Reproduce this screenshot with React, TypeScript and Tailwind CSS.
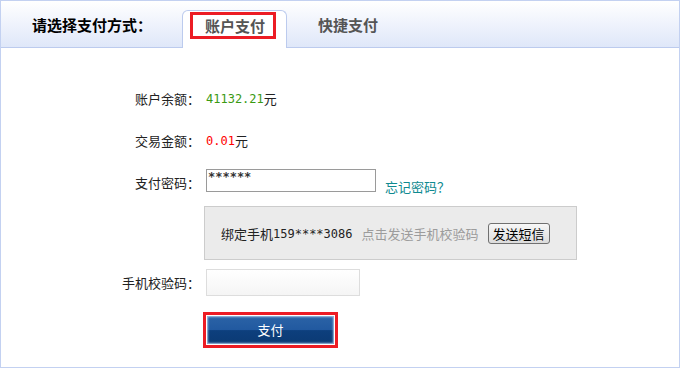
const mono = "font-['DejaVu_Sans_Mono','Noto_Sans_CJK_SC',monospace] text-[12px]";

export default function App() {
  return (
    <div className="w-[680px] h-[368px] border border-[#c3d1f1] bg-white flex flex-col font-['Noto_Sans_CJK_SC',sans-serif] text-[13px] text-[#222] leading-[20px]">
      <div className="h-[47px] shrink-0 flex items-stretch border-b border-[#bccbee] bg-gradient-to-b from-white to-[#dfe7f9]">
        <div className="w-[181px] pl-[31px] pt-[2px] flex items-center text-[15px] font-bold text-black">
          请选择支付方式：
        </div>
        <div className="mt-[9px] -mb-px w-[105px] bg-white border border-b-0 border-[#bccbee] rounded-t-[6px] pl-[7px] pt-[1px]">
          <span className="flex items-center h-[27px] w-[86px] border-[3px] border-[#ec1c24] pl-[12px] text-[15px] font-bold text-[#555] leading-none">
            账户支付
          </span>
        </div>
        <div className="ml-[31px] pt-[2px] flex items-center text-[15px] font-bold text-[#555]">快捷支付</div>
      </div>

      <div className="flex flex-col">
        <div className="mt-[41px] h-[20px] flex items-center">
          <div className="w-[199px] text-right">账户余额：</div>
          <div className="ml-[6px] flex items-center">
            <span className={`${mono} text-[#3a9a12]`}>41132.21</span>
            <span>元</span>
          </div>
        </div>

        <div className="mt-[22px] h-[20px] flex items-center">
          <div className="w-[199px] text-right">交易金额：</div>
          <div className="ml-[6px] flex items-center">
            <span className={`${mono} text-[#ff0000]`}>0.01</span>
            <span>元</span>
          </div>
        </div>

        <div className="mt-[18px] h-[23px] flex items-start">
          <div className="w-[199px] text-right mt-[4px]">支付密码：</div>
          <div className="ml-[6px] w-[170px] h-[23px] border border-[#9a9a9a] bg-white pl-[1px]">
            <span className={`${mono} block leading-[14px] font-bold text-[#333]`}>******</span>
          </div>
          <a className="ml-[9px] mt-[8px] text-[#0e8a90]">忘记密码？</a>
        </div>

        <div className="mt-[14px] ml-[203px] w-[373px] h-[54px] border border-[#cccccc] bg-[#ebebeb] flex items-center pl-[16px] pt-[1px]">
          <span>绑定手机</span>
          <span className={mono}>159****3086</span>
          <span className="ml-[9px] text-[#9c9c9c]">点击发送手机校验码</span>
          <button className="ml-[9px] w-[62px] h-[21px] border border-[#707070] rounded-[3px] bg-gradient-to-b from-[#f7f7f7] to-[#dcdcdc] text-[13px] text-black leading-none flex items-center justify-center">
            发送短信
          </button>
        </div>

        <div className="mt-[9px] h-[27px] flex items-center">
          <div className="w-[199px] text-right">手机校验码：</div>
          <div className="ml-[6px] w-[154px] h-[27px] border border-[#dddddd] bg-gradient-to-b from-white to-[#f5f5f5]"></div>
        </div>

        <div className="mt-[16px] ml-[202px] w-[135px] h-[36px] border-[3px] border-[#ec1c24] p-[1px] bg-white">
          <button className="w-full h-full flex items-center justify-center text-white text-[13px] bg-[linear-gradient(to_bottom,#2b63a6_0%,#2159a0_50%,#0d3f7d_52%,#0b3a74_100%)] shadow-[inset_0_0_2px_1px_#a9c6e6] rounded-[1px]">
            支付
          </button>
        </div>
      </div>
    </div>
  );
}
